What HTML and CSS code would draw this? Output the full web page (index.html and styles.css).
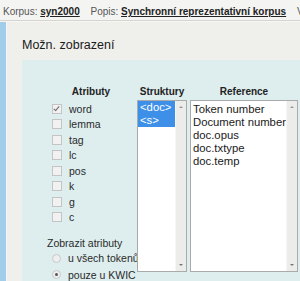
FILE: index.html
```html
<!DOCTYPE html><html>
<head>
  <title>Možn. zobrazení</title>
  <meta charset="UTF-8">
  <meta name="viewport" content="width=device-width, initial-scale=1.0">
  <link rel="stylesheet" href="styles.css">
</head>
<body>
<div class="topbar">
  <span class="lbl">Korpus:</span> <a class="val">syn2000</a>
  <span class="lbl gap">Popis:</span> <a class="val">Synchronní reprezentativní korpus</a>
  <span class="lbl gap">Velikost:</span>
</div>
<div class="main">
  <div class="side"></div>
  <div class="panel">
    <h2>Možn. zobrazení</h2>
    <div class="options">
      <div class="col attrs">
        <div class="colhead">Atributy</div>
        <ul class="checks">
          <li><span class="cb on"></span>word</li>
          <li><span class="cb"></span>lemma</li>
          <li><span class="cb"></span>tag</li>
          <li><span class="cb"></span>lc</li>
          <li><span class="cb"></span>pos</li>
          <li><span class="cb"></span>k</li>
          <li><span class="cb"></span>g</li>
          <li><span class="cb"></span>c</li>
        </ul>
        <div class="sep"></div>
        <div class="label">Zobrazit atributy</div>
        <ul class="radios">
          <li><span class="rb"></span>u všech tokenů</li>
          <li><span class="rb on"></span>pouze u KWIC</li>
        </ul>
      </div>
      <div class="col structs">
        <div class="colhead">Struktury</div>
        <div class="listbox">
          <ul class="items">
            <li class="sel">&lt;doc&gt;</li>
            <li class="sel">&lt;s&gt;</li>
          </ul>
          <div class="scroll"><span class="up"></span><span class="down"></span></div>
        </div>
      </div>
      <div class="col refs">
        <div class="colhead">Reference</div>
        <div class="listbox">
          <ul class="items">
            <li>Token number</li>
            <li>Document number</li>
            <li>doc.opus</li>
            <li>doc.txtype</li>
            <li>doc.temp</li>
          </ul>
          <div class="scroll"><span class="up"></span><span class="down"></span></div>
        </div>
      </div>
    </div>
  </div>
</div>
</body>
</html>
```

FILE: styles.css
```css
body {
  margin: 0;
  font-family: "Liberation Sans", Arial, sans-serif;
  color: #2a2a2a;
  background: #f7f6f3;
  overflow: hidden;
  height: 281px;
}
ul {
  list-style: none;
  margin: 0;
  padding: 0;
}
li {
  white-space: nowrap;
}
.topbar {
  height: 20px;
  line-height: 24px;
  padding-left: 3px;
  font-size: 10px;
  white-space: nowrap;
  overflow: hidden;
  background: #f4f4f2;
  border-bottom: 1px solid #d4d4d0;
}
.lbl {
  color: #555;
}
.gap {
  margin-left: 8px;
}
.val {
  font-weight: bold;
  color: #222;
  text-decoration: underline;
}
.main {
  display: flex;
  height: 260px;
}
.side {
  width: 6px;
  margin-top: 1px;
  margin-right: 1px;
  background: #a2cdeb;
}
.panel {
  flex: 1;
  display: flex;
  flex-direction: column;
  margin-top: 1px;
  background: #efefec;
  padding-left: 15px;
}
.panel h2 {
  margin: 15px 0 0;
  height: 23px;
  font-size: 12.5px;
  line-height: 16px;
  font-weight: normal;
  color: #1a1a1a;
}
.options {
  flex: 1;
  display: flex;
  padding: 25px 0 0 25px;
  background: #deeeee;
  overflow: hidden;
}
.col {
  display: flex;
  flex-direction: column;
}
.colhead {
  height: 15px;
  line-height: 13px;
  font-size: 10px;
  font-weight: bold;
  text-align: center;
  white-space: nowrap;
  color: #222;
}
.attrs {
  width: 88px;
  font-size: 10.5px;
}
.checks {
  margin-top: 3px;
}
.checks li, .radios li {
  display: flex;
  align-items: center;
  height: 15.5px;
  padding-left: 5px;
}
.cb {
  flex: none;
  width: 8px;
  height: 8px;
  margin-right: 7px;
  border: 1px solid #c4c4c4;
  background: #f1f1f1;
  position: relative;
}
.cb.on::after {
  content: "";
  position: absolute;
  left: 2px;
  top: 0;
  width: 2px;
  height: 5px;
  border: solid #6a6a6a;
  border-width: 0 1px 1px 0;
  transform: rotate(40deg);
}
.sep {
  margin-top: 6px;
  height: 1px;
  background: #9fa5a5;
}
.label {
  margin-top: 6px;
  height: 15px;
  line-height: 13px;
  white-space: nowrap;
}
.radios li {
  height: 16.5px;
}
.rb {
  flex: none;
  width: 7px;
  height: 7px;
  margin-right: 7px;
  border: 1px solid #c8c8c8;
  border-radius: 50%;
  background: #eeeeee;
  position: relative;
}
.rb.on::after {
  content: "";
  position: absolute;
  left: 2px;
  top: 2px;
  width: 3px;
  height: 3px;
  border-radius: 50%;
  background: #555;
}
.structs {
  width: 50px;
  margin-left: 2px;
}
.refs {
  width: 108px;
  margin-left: 3px;
}
.listbox {
  display: flex;
  height: 170px;
  border: 1px solid #a9aaaa;
  background: #fff;
}
.items {
  flex: 1;
  min-width: 0;
  overflow: hidden;
  font-size: 11.3px;
}
.structs .items li {
  height: 13px;
  line-height: 13px;
  padding-left: 2px;
  color: #fff;
}
.structs .items li.sel {
  background: #3d8fe8;
}
.refs .items {
  padding: 2px 0 0 2px;
}
.refs .items li {
  height: 13px;
  line-height: 13px;
  color: #1a1a1a;
}
.scroll {
  flex: none;
  width: 10px;
  background: #ececea;
  border-left: 1px solid #f6f6f6;
  display: flex;
  flex-direction: column;
  justify-content: space-between;
  align-items: center;
  padding: 5px 0;
}
.up, .down {
  width: 0;
  height: 0;
  border-left: 2px solid transparent;
  border-right: 2px solid transparent;
}
.up {
  border-bottom: 2px solid #999;
}
.down {
  border-top: 2px solid #777;
}
```
